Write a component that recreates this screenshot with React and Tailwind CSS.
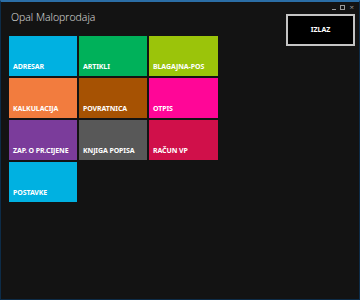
import React from 'react';

const tiles = [
  { label: 'ADRESAR', color: 'bg-[#00b1e1]' },
  { label: 'ARTIKLI', color: 'bg-[#00b15a]' },
  { label: 'BLAGAJNA-POS', color: 'bg-[#9bc40a]' },
  { label: 'KALKULACIJA', color: 'bg-[#f27c3e]' },
  { label: 'POVRATNICA', color: 'bg-[#a65203]' },
  { label: 'OTPIS', color: 'bg-[#ff0697]' },
  { label: 'ZAP. O PR.CIJENE', color: 'bg-[#7b3c9b]' },
  { label: 'KNJIGA POPISA', color: 'bg-[#585858]' },
  { label: 'RAČUN VP', color: 'bg-[#d0104a]' },
  { label: 'POSTAVKE', color: 'bg-[#00b1e1]' },
];

export default function App() {
  return (
    <div className="relative w-[360px] h-[300px] bg-[#131313] border-t-2 border-t-[#2b6ea6] border-x border-b border-[#0d2c48] font-['Open_Sans','Noto_Sans',sans-serif] text-white overflow-hidden">
      {/* caption buttons */}
      <div className="absolute top-[2px] right-[5px] flex items-center gap-[4px] text-[7px] leading-[6px] text-[#9a9a9a]">
        <span className="w-[4px] h-[1px] bg-[#9a9a9a] mt-[4px]" />
        <span className="w-[5px] h-[5px] border border-[#9a9a9a]" />
        <span className="text-[8px]">×</span>
      </div>

      <div className="flex justify-between">
        <div className="pl-[8px] pt-[8px]">
          <div className="pl-[2px] text-[10.5px] leading-[14px] text-[#e0e0e0] font-light">Opal Maloprodaja</div>
          <div className="mt-[12px] grid grid-cols-[68px_68px_69px] auto-rows-[40px] gap-[2px]">
            {tiles.map((t) => (
              <div key={t.label} className={`${t.color} flex items-end px-[4px] pb-[5px]`}>
                <span className="text-[7px] leading-[9px] font-bold tracking-[-0.1px] font-['Noto_Sans',sans-serif]">{t.label}</span>
              </div>
            ))}
          </div>
        </div>

        <div className="pt-[12px] pr-[4px]">
          <button className="w-[69px] h-[32px] bg-black border-2 border-[#c4c4c4] flex items-center justify-center text-[7px] font-bold font-['Noto_Sans',sans-serif] text-white">
            IZLAZ
          </button>
        </div>
      </div>
    </div>
  );
}
